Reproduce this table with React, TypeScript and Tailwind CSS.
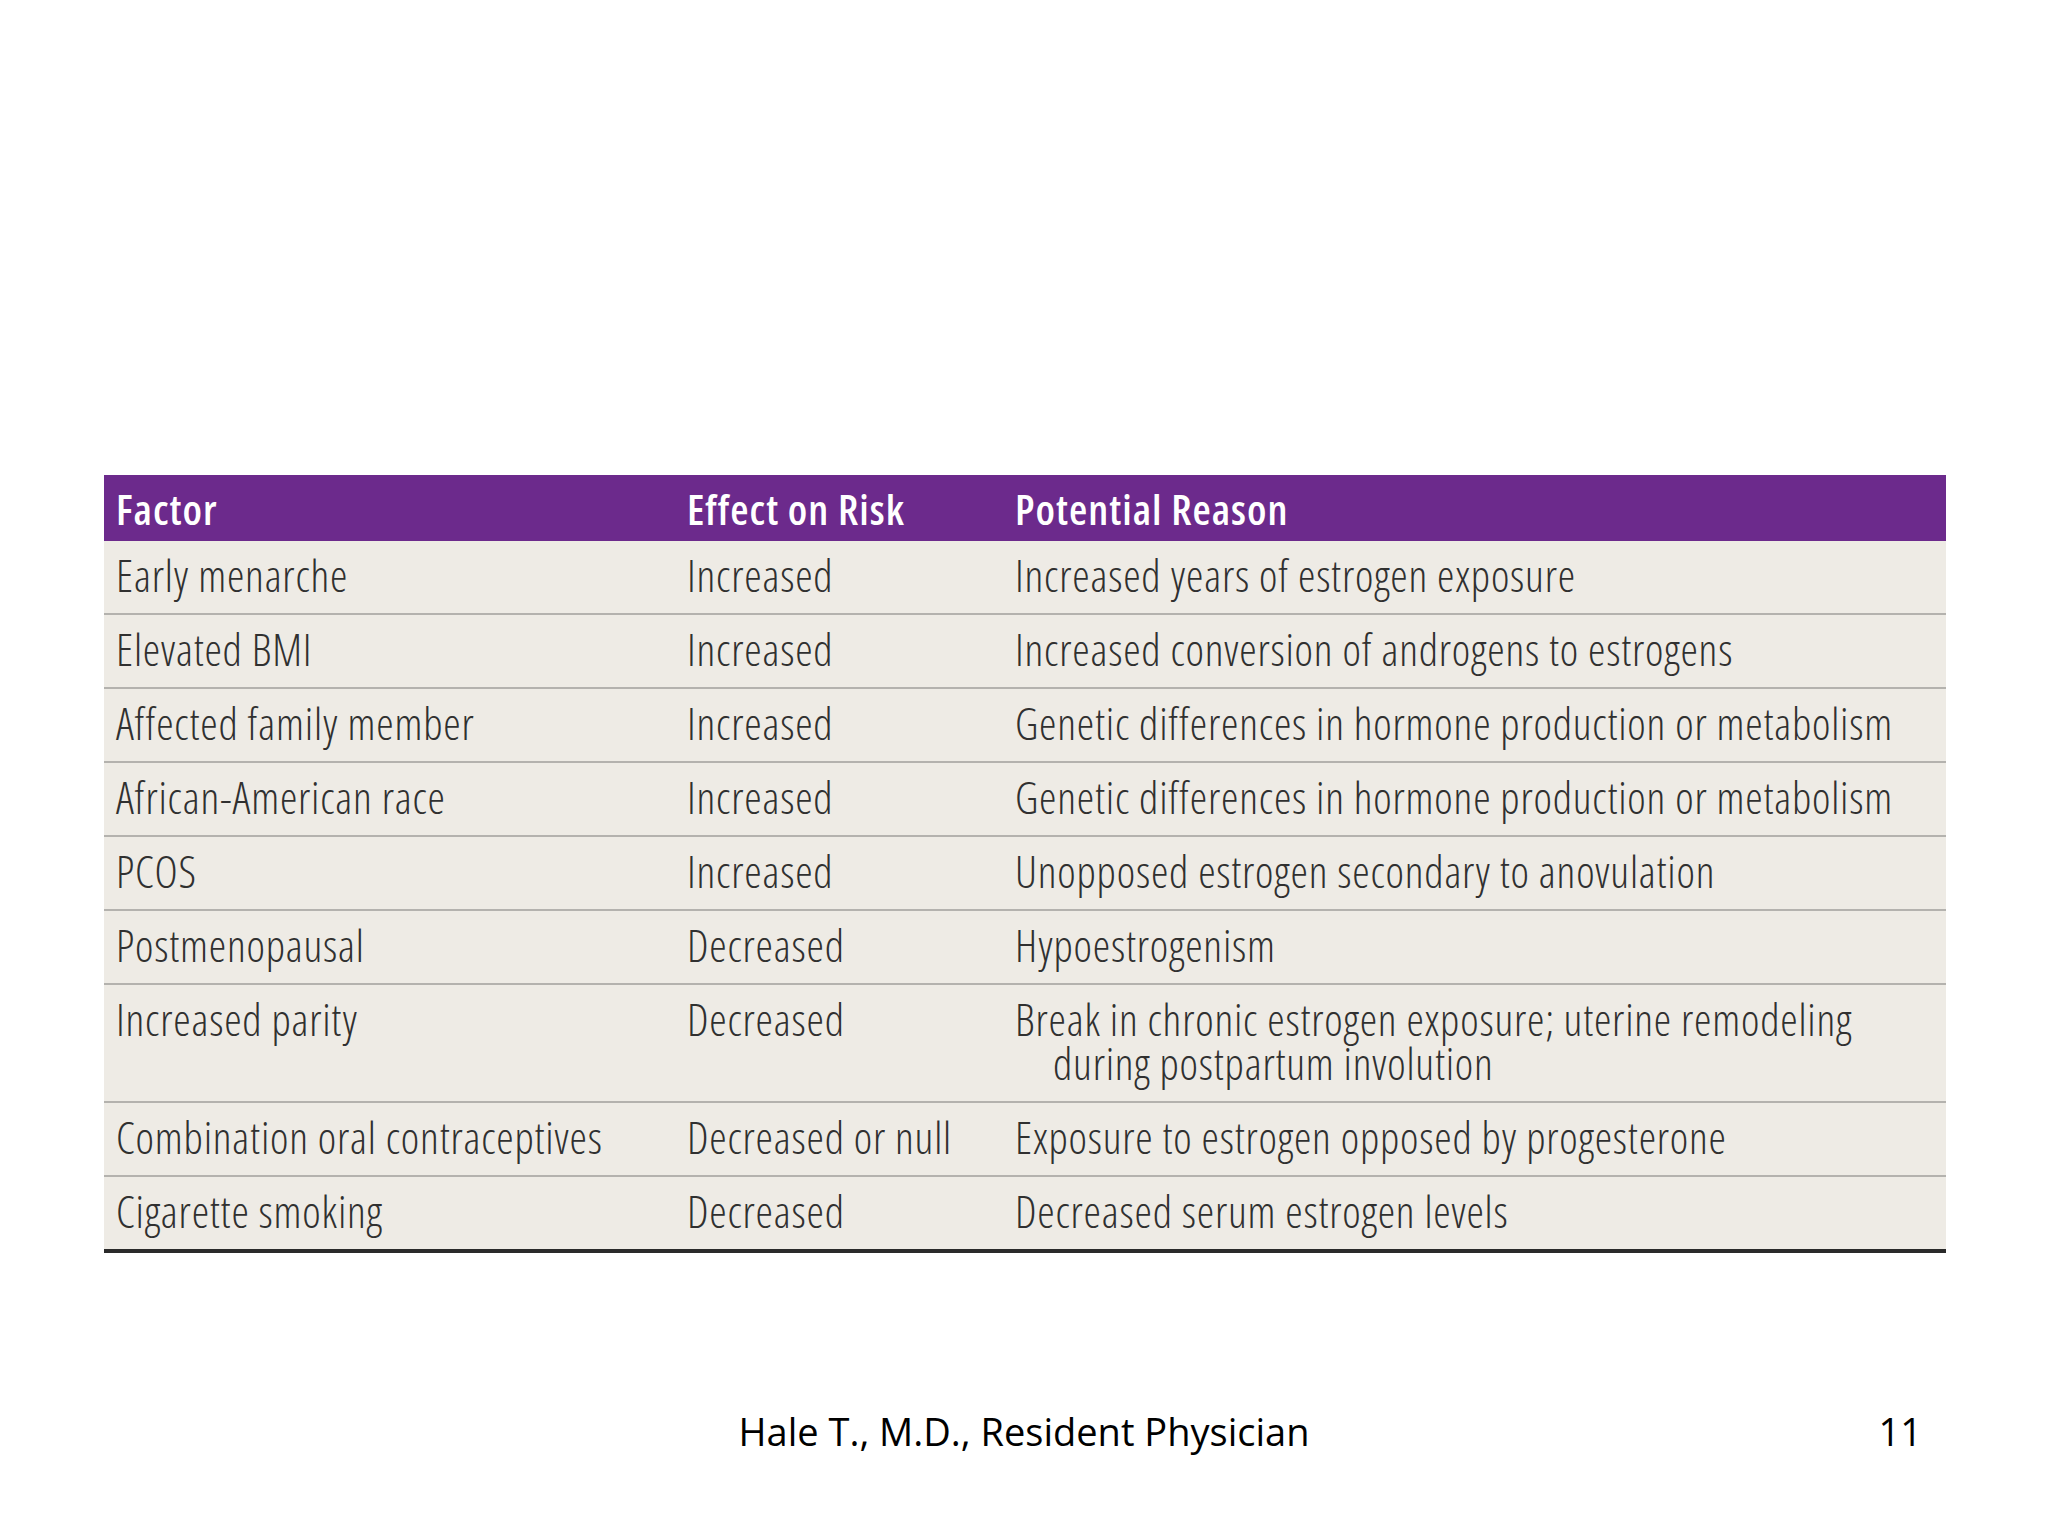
const rows: { factor: string; effect: string; reason: string }[] = [
  { factor: "Early menarche", effect: "Increased", reason: "Increased years of estrogen exposure" },
  { factor: "Elevated BMI", effect: "Increased", reason: "Increased conversion of androgens to estrogens" },
  { factor: "Affected family member", effect: "Increased", reason: "Genetic differences in hormone production or metabolism" },
  { factor: "African-American race", effect: "Increased", reason: "Genetic differences in hormone production or metabolism" },
  { factor: "PCOS", effect: "Increased", reason: "Unopposed estrogen secondary to anovulation" },
  { factor: "Postmenopausal", effect: "Decreased", reason: "Hypoestrogenism" },
  {
    factor: "Increased parity",
    effect: "Decreased",
    reason: "Break in chronic estrogen exposure; uterine remodeling during postpartum involution",
  },
  { factor: "Combination oral contraceptives", effect: "Decreased or null", reason: "Exposure to estrogen opposed by progesterone" },
  { factor: "Cigarette smoking", effect: "Decreased", reason: "Decreased serum estrogen levels" },
];

const narrow = { fontFamily: '"Open Sans", "Noto Sans", sans-serif', fontStretch: "75%" };

export default function App() {
  return (
    <div className="w-[2048px] h-[1536px] bg-white flex flex-col overflow-hidden">
      {/* Table */}
      <div className="mt-[475px] ml-[104px] w-[1842px]" style={narrow}>
        <div className="flex h-[66px] items-center bg-[#6c2a8c] text-white font-semibold text-[42px] tracking-[1px]">
          <div className="w-[583px] pl-[12px]">Factor</div>
          <div className="w-[328px]">Effect on Risk</div>
          <div className="flex-1">Potential Reason</div>
        </div>
        {rows.map((r, i) => (
          <div
            key={i}
            className={`flex bg-[#eeebe5] text-[#303030] text-[44px] tracking-[0.8px] leading-[44px] pt-[12px] pb-[16px] font-light ${
              i === rows.length - 1 ? "border-b-[4px] border-[#2a2a2a]" : "border-b-2 border-[#b4b2ae]"
            }`}
          >
            <div className="w-[583px] pl-[12px]">{r.factor}</div>
            <div className="w-[328px]">{r.effect}</div>
            <div className="flex-1 pl-[38px] -indent-[38px] pr-[40px]">{r.reason}</div>
          </div>
        ))}
      </div>

      {/* Footer */}
      <div
        className="mt-auto mb-[76px] flex items-center text-black text-[38px]"
        style={{ fontFamily: '"Open Sans", "Noto Sans", sans-serif' }}
      >
        <div className="flex-1 text-center">Hale T., M.D., Resident Physician</div>
        <div className="absolute right-[126px]">11</div>
      </div>
    </div>
  );
}
